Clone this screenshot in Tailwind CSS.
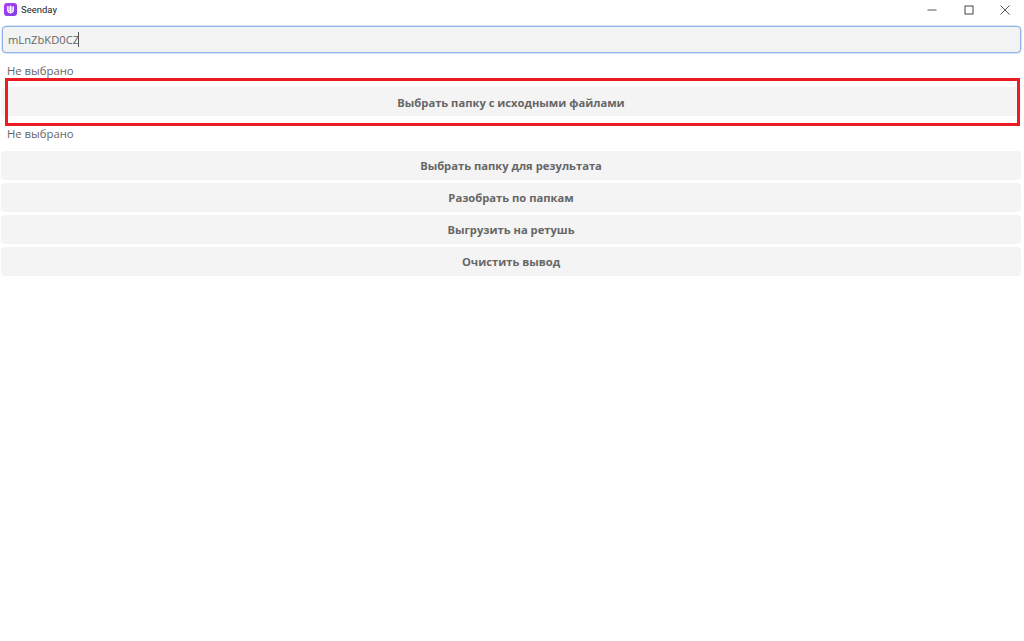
<!DOCTYPE html>
<html lang="ru">
<head>
<meta charset="utf-8">
<title>Seenday</title>
<script src="https://cdn.jsdelivr.net/npm/@tailwindcss/browser@4"></script>
</head>
<body class="bg-white">
<div class="relative h-[641px] w-[1024px] overflow-hidden bg-white font-['Open_Sans','Noto_Sans',sans-serif] text-[#666666]">
  <header class="flex h-[19px] items-center justify-between">
    <div class="flex items-center gap-[4px] pl-[4px]">
      <span class="flex h-[12.5px] w-[13px] items-center justify-center rounded-[3px] bg-gradient-to-br from-[#b23ff2] to-[#7c3de6]">
        <svg viewBox="0 0 12 12" class="h-[11px] w-[11px]" fill="none" stroke="white" stroke-width="1.2" stroke-linecap="round"><path d="M2.8 3v3.2a3.2 3.2 0 0 0 6.4 0V3M6 2.2v7.6M4.4 2.8v4.5M7.6 2.8v4.5"/></svg>
      </span>
      <span class="font-['Roboto',sans-serif] text-[9.5px] leading-none text-[#222]">Seenday</span>
    </div>
    <div class="flex items-center pr-[1px]">
      <span class="flex h-[19px] w-[37px] items-center justify-center pl-[2px]">
        <svg viewBox="0 0 10 10" class="h-[10px] w-[10px]" stroke="#555" stroke-width="1"><path d="M0.5 5h9"/></svg>
      </span>
      <span class="flex h-[19px] w-[37px] items-center justify-center pl-[2px]">
        <svg viewBox="0 0 10 10" class="h-[10px] w-[10px]" fill="none" stroke="#444" stroke-width="1"><rect x="1" y="1" width="8" height="8"/></svg>
      </span>
      <span class="flex h-[19px] w-[37px] items-center justify-center">
        <svg viewBox="0 0 10 10" class="h-[10px] w-[10px]" stroke="#444" stroke-width="0.9"><path d="M0.5 0.5l9 9M9.5 0.5l-9 9"/></svg>
      </span>
    </div>
  </header>
  <main class="flex flex-col pl-[1px] pr-[3px] pt-[7px]">
    <div class="ml-[1px] flex h-[27px] items-center rounded-[4px] border border-[#8fb4ee] bg-[#f3f3f3] pl-[5px] text-[11.2px] shadow-[0_0_0_0.5px_#b8cff3]">
      <span class="pt-[1px]">mLnZbKD0CZ</span><span class="ml-[-1px] h-[15px] w-px bg-[#555]"></span>
    </div>
    <p class="mt-[10px] h-[16px] pl-[6px] text-[11.3px] leading-[16px]">Не выбрано</p>
    <button class="mt-[8px] h-[29px] rounded-[4px] bg-[#f4f4f4] pt-[3px] text-[11.2px] font-bold text-[#666666]">Выбрать папку с исходными файлами</button>
    <p class="mt-[10px] h-[16px] pl-[6px] text-[11.3px] leading-[16px]">Не выбрано</p>
    <div class="mt-[9px] flex flex-col gap-[3.5px]">
      <button class="h-[28.5px] rounded-[4px] bg-[#f4f4f4] pt-[3px] text-[11.2px] font-bold text-[#666666]">Выбрать папку для результата</button>
      <button class="h-[28.5px] rounded-[4px] bg-[#f4f4f4] pt-[3px] text-[11.2px] font-bold text-[#666666]">Разобрать по папкам</button>
      <button class="h-[28.5px] rounded-[4px] bg-[#f4f4f4] pt-[3px] text-[11.2px] font-bold text-[#666666]">Выгрузить на ретушь</button>
      <button class="h-[28.5px] rounded-[4px] bg-[#f4f4f4] pt-[3px] text-[11.2px] font-bold text-[#666666]">Очистить вывод</button>
    </div>
  </main>
  <div class="absolute left-[5px] top-[77.5px] h-[48.5px] w-[1015px] border-[3px] border-[#ec1c24]"></div>
</div>
</body>
</html>
